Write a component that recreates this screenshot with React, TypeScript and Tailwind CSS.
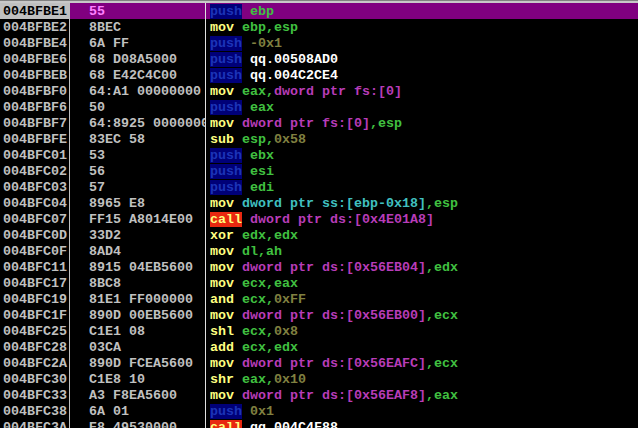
import React from "react";

type Kind = "op" | "push" | "call" | "reg" | "num" | "mem" | "stk" | "lbl";
type Tok = [string, Kind];

type Line = {
  addr: string;
  hex: string;
  asm: Tok[];
};

const lines: Line[] = [
  { addr: "004BFBE1", hex: "55", asm: [["push", "push"], [" ebp", "reg"]] },
  { addr: "004BFBE2", hex: "8BEC", asm: [["mov", "op"], [" ebp,esp", "reg"]] },
  { addr: "004BFBE4", hex: "6A FF", asm: [["push", "push"], [" -0x1", "num"]] },
  { addr: "004BFBE6", hex: "68 D08A5000", asm: [["push", "push"], [" qq.00508AD0", "lbl"]] },
  { addr: "004BFBEB", hex: "68 E42C4C00", asm: [["push", "push"], [" qq.004C2CE4", "lbl"]] },
  { addr: "004BFBF0", hex: "64:A1 00000000", asm: [["mov", "op"], [" eax,", "reg"], ["dword ptr fs:[0]", "mem"]] },
  { addr: "004BFBF6", hex: "50", asm: [["push", "push"], [" eax", "reg"]] },
  { addr: "004BFBF7", hex: "64:8925 00000000", asm: [["mov", "op"], [" dword ptr fs:[0]", "mem"], [",esp", "reg"]] },
  { addr: "004BFBFE", hex: "83EC 58", asm: [["sub", "op"], [" esp,", "reg"], ["0x58", "num"]] },
  { addr: "004BFC01", hex: "53", asm: [["push", "push"], [" ebx", "reg"]] },
  { addr: "004BFC02", hex: "56", asm: [["push", "push"], [" esi", "reg"]] },
  { addr: "004BFC03", hex: "57", asm: [["push", "push"], [" edi", "reg"]] },
  { addr: "004BFC04", hex: "8965 E8", asm: [["mov", "op"], [" dword ptr ss:[ebp-0x18]", "stk"], [",esp", "reg"]] },
  { addr: "004BFC07", hex: "FF15 A8014E00", asm: [["call", "call"], [" dword ptr ds:[0x4E01A8]", "mem"]] },
  { addr: "004BFC0D", hex: "33D2", asm: [["xor", "op"], [" edx,edx", "reg"]] },
  { addr: "004BFC0F", hex: "8AD4", asm: [["mov", "op"], [" dl,ah", "reg"]] },
  { addr: "004BFC11", hex: "8915 04EB5600", asm: [["mov", "op"], [" dword ptr ds:[0x56EB04]", "mem"], [",edx", "reg"]] },
  { addr: "004BFC17", hex: "8BC8", asm: [["mov", "op"], [" ecx,eax", "reg"]] },
  { addr: "004BFC19", hex: "81E1 FF000000", asm: [["and", "op"], [" ecx,", "reg"], ["0xFF", "num"]] },
  { addr: "004BFC1F", hex: "890D 00EB5600", asm: [["mov", "op"], [" dword ptr ds:[0x56EB00]", "mem"], [",ecx", "reg"]] },
  { addr: "004BFC25", hex: "C1E1 08", asm: [["shl", "op"], [" ecx,", "reg"], ["0x8", "num"]] },
  { addr: "004BFC28", hex: "03CA", asm: [["add", "op"], [" ecx,edx", "reg"]] },
  { addr: "004BFC2A", hex: "890D FCEA5600", asm: [["mov", "op"], [" dword ptr ds:[0x56EAFC]", "mem"], [",ecx", "reg"]] },
  { addr: "004BFC30", hex: "C1E8 10", asm: [["shr", "op"], [" eax,", "reg"], ["0x10", "num"]] },
  { addr: "004BFC33", hex: "A3 F8EA5600", asm: [["mov", "op"], [" dword ptr ds:[0x56EAF8]", "mem"], [",eax", "reg"]] },
  { addr: "004BFC38", hex: "6A 01", asm: [["push", "push"], [" 0x1", "num"]] },
  { addr: "004BFC3A", hex: "E8 49530000", asm: [["call", "call"], [" qq.004C4F88", "lbl"]] },
];

const tokClass: Record<Kind, string> = {
  op: "text-[#ffff80]",
  push: "bg-[#000078] text-[#1c34b8]",
  call: "bg-[#e82810] text-[#ffff80]",
  reg: "text-[#40c040]",
  num: "text-[#808040]",
  mem: "text-[#b83cb8]",
  stk: "text-[#40c0c0]",
  lbl: "text-white",
};

function Asm({ toks }: { toks: Tok[] }) {
  return (
    <>
      {toks.map(([text, kind], i) => {
        // leading space belongs to the gap, not to the coloured block
        const lead = text.startsWith(" ");
        return (
          <React.Fragment key={i}>
            {lead && <span> </span>}
            <span className={tokClass[kind]}>{lead ? text.slice(1) : text}</span>
          </React.Fragment>
        );
      })}
    </>
  );
}

export default function App() {
  return (
    <div
      className="h-[428px] w-[638px] overflow-hidden bg-black font-bold text-[13.33px] leading-[16px] whitespace-pre"
      style={{ fontFamily: '"Liberation Mono", "DejaVu Sans Mono", monospace' }}
    >
      <div className="h-[1px] bg-[#808080]" />
      <div className="h-[2px] bg-[#c8c8c8]" />
      {lines.map((l, i) => {
        const sel = i === 0;
        return (
          <div key={l.addr} className="flex h-[16px]">
            <div
              className={
                "w-[70px] shrink-0 border-r border-[#c0c0c0] pl-[3px] pt-[1px] " +
                (sel ? "bg-[#c0c0c0] text-black" : "text-[#c0c0c0]")
              }
            >
              {l.addr}
            </div>
            <div
              className={
                "w-[136px] shrink-0 overflow-hidden border-r border-[#e0e0e0] pl-[19px] pt-[1px] " +
                (sel ? "bg-[#800080] text-[#ff80ff]" : "text-[#c0c0c0]")
              }
            >
              {l.hex}
            </div>
            <div className={"flex-1 overflow-hidden pl-[4px] pt-[1px] " + (sel ? "bg-[#800080]" : "")}>
              <Asm toks={l.asm} />
            </div>
          </div>
        );
      })}
    </div>
  );
}
